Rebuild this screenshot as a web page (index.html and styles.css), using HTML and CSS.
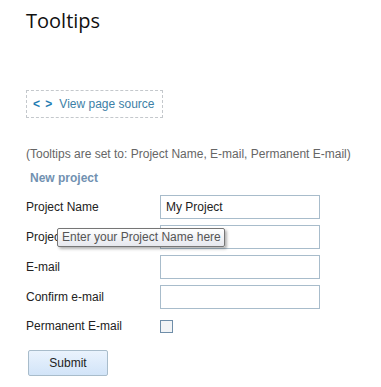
FILE: index.html
```html
<!DOCTYPE html>
<html lang="en">
<head>
  <meta charset="UTF-8">
  <title>Tooltips</title>
  <link rel="stylesheet" href="styles.css">
</head>
<body>

  <div class="page">
    <h1 class="page-title">Tooltips</h1>

    <a class="source-link">
      <span class="source-icon">&lt; &gt;</span>
      <span class="source-text">View page source</span>
    </a>

    <p class="note">(Tooltips are set to: Project Name, E-mail, Permanent E-mail)</p>

    <form class="project-form">
      <h2 class="form-title">New project</h2>
      <div class="form-row">
        <label class="form-label">Project Name</label>
        <input type="text" class="form-input" value="My Project">
      </div>
      <div class="form-row">
        <label class="form-label">Project Code</label>
        <input type="text" class="form-input">
        <div class="tooltip">Enter your Project Name here</div>
      </div>
      <div class="form-row">
        <label class="form-label">E-mail</label>
        <input type="text" class="form-input">
      </div>
      <div class="form-row">
        <label class="form-label">Confirm e-mail</label>
        <input type="text" class="form-input">
      </div>
      <div class="form-row check-row">
        <label class="form-label">Permanent E-mail</label>
        <span class="form-check"></span>
      </div>
      <button type="button" class="submit-button">Submit</button>
    </form>
  </div>

</body>
</html>
```

FILE: styles.css
```css
body {
  margin: 0;
  background: #fff;
  font-family: 'Liberation Sans', Arial, sans-serif;
  font-size: 12px;
  color: #222;
}
.page {
  padding: 8px 0 0 26px;
}
.page-title {
  margin: 0;
  font-family: 'Open Sans', sans-serif;
  font-size: 20px;
  font-weight: 400;
  line-height: 26px;
  color: #111;
}
.source-link {
  display: flex;
  align-items: center;
  width: 135px;
  height: 26px;
  margin-top: 56px;
  border: 1px dashed #c4c8cc;
  cursor: pointer;
}
.source-icon {
  margin-left: 6px;
  font-weight: 700;
  font-size: 12px;
  color: #1f7db3;
  letter-spacing: 1px;
}
.source-text {
  margin-left: 6px;
  color: #3d7fa6;
}
.note {
  margin: 28px 0 0;
  line-height: 16px;
  color: #666;
}
.project-form {
  margin: 0;
}
.form-title {
  margin: 8px 0 0 4px;
  font-size: 12px;
  font-weight: 700;
  line-height: 16px;
  color: #7191b1;
}
.form-row {
  position: relative;
  display: flex;
  align-items: center;
  height: 24px;
  margin-top: 6px;
}
.form-row:first-of-type {
  margin-top: 9px;
}
.form-label {
  width: 134px;
  color: #222;
}
.form-input {
  box-sizing: border-box;
  width: 160px;
  height: 24px;
  margin: 0;
  padding: 0 5px;
  border: 1px solid #a8bccb;
  font-family: inherit;
  font-size: 12px;
  color: #222;
  outline: none;
}
.check-row {
  margin-top: 5px;
}
.form-check {
  box-sizing: border-box;
  width: 13px;
  height: 13px;
  border: 1px solid #6f8ea9;
  background: #f2f4f6;
}
.submit-button {
  display: block;
  width: 80px;
  height: 26px;
  margin: 12px 0 0 2px;
  border: 1px solid #a8bccb;
  border-radius: 2px;
  background: linear-gradient(to bottom, #eaf3fd, #d2e4f8);
  font-family: inherit;
  font-size: 12px;
  color: #222;
}
.tooltip {
  position: absolute;
  left: 31px;
  top: 3px;
  padding: 1px 3px 2px 4px;
  border: 1px solid #767676;
  border-radius: 2px;
  background: linear-gradient(to bottom, #fff, #e6e8ee);
  box-shadow: 2px 2px 3px rgba(0, 0, 0, 0.3);
  font-size: 12px;
  line-height: 14px;
  color: #555;
  white-space: nowrap;
}
```
